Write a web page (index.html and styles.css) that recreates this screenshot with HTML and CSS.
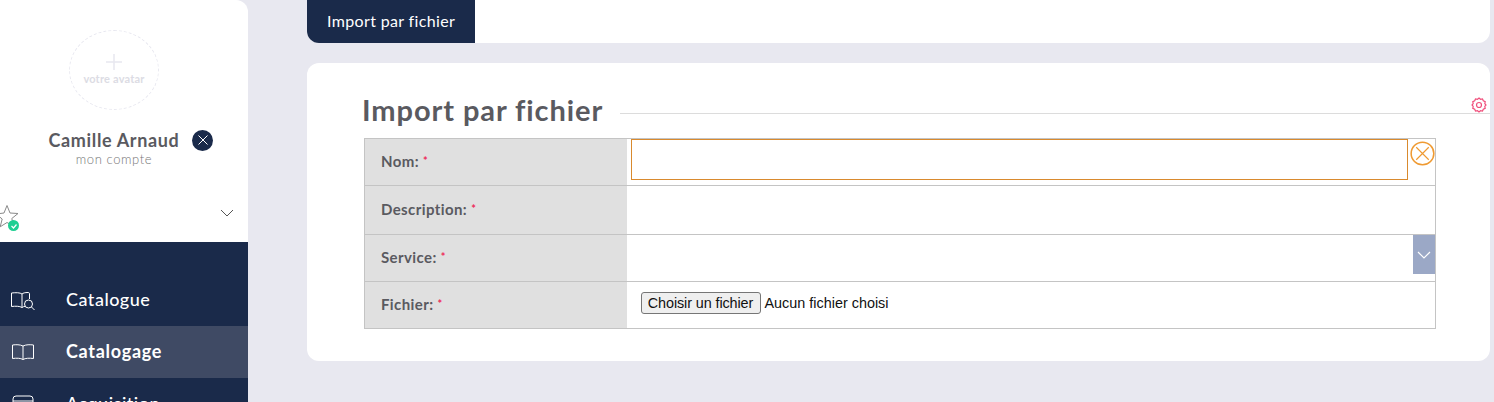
FILE: index.html
```html
<!DOCTYPE html>
<html lang="fr">
<head>
  <meta charset="UTF-8">
  <title>Import par fichier</title>
  <link rel="stylesheet" href="styles.css">
</head>
<body>
  <aside class="sidebar">
    <div class="profile">
      <div class="avatar">
        <svg class="avatar-plus" width="16" height="16" viewBox="0 0 16 16"><path d="M8 0v16M0 8h16" stroke="#e8e8f0" stroke-width="1.5" fill="none"/></svg>
        <span>votre avatar</span>
      </div>
      <div class="user-row">
        <span class="user-name">Camille Arnaud</span>
        <span class="logout">
          <svg width="10" height="10" viewBox="0 0 10 10"><path d="M.5.5l9 9M9.500.5l-9 9" stroke="#fff" stroke-width="1" fill="none"/></svg>
        </span>
      </div>
      <div class="user-link">mon compte</div>
      <div class="favorites">
        <span class="star">
          <svg width="22" height="24" viewBox="0 0 22 24"><path d="M7 .5l3 7.500 8 .5-6.200 5 2 7.800L7 17.500 .2 21.800l2-7.800L-4 9l8-1z" stroke="#8a8a8a" stroke-width="1" fill="none"/></svg>
          <span class="star-check">
            <svg width="8" height="8" viewBox="0 0 8 8"><path d="M1.500 4l2 2 3-3.500" stroke="#fff" stroke-width="1.200" fill="none"/></svg>
          </span>
        </span>
        <svg class="fav-arrow" width="14" height="8" viewBox="0 0 14 8"><path d="M1 1l6 6 6-6" stroke="#555" stroke-width="1" fill="none"/></svg>
      </div>
    </div>
    <nav class="menu">
      <a class="menu-item" href="#">
        <svg width="26" height="20" viewBox="0 0 26 20"><path d="M12 4C10 2.500 6 2.500 1.500 3v13.500c4-.5 8-.5 10.500 1 1-.7 2-1 3-1.200M12 4v13.500M12 4c1-1 3-1.500 6-1.500 1.200 0 1.500 .5 1.500 1.500v5" stroke="#fff" stroke-width="1" fill="none"/><circle cx="18.500" cy="14" r="4" stroke="#fff" fill="none"/><path d="M21.500 17l3 3" stroke="#fff" fill="none"/></svg>
        <span>Catalogue</span>
      </a>
      <a class="menu-item active" href="#">
        <svg width="26" height="20" viewBox="0 0 26 20"><path d="M13 4C10 2.500 6 2.500 2.500 3v13.500c4-.5 8-.5 10.500 1 2.500-1.500 6.500-1.500 10.500-1V3c-3.500-.5-7.500-.5-10.500 1zM13 4v13.500" stroke="#fff" stroke-width="1" fill="none"/></svg>
        <span>Catalogage</span>
      </a>
      <a class="menu-item" href="#">
        <svg width="26" height="20" viewBox="0 0 26 20"><rect x="3" y="2" width="20" height="14" rx="3" stroke="#fff" fill="none"/><path d="M3 7h20" stroke="#fff" fill="none"/></svg>
        <span>Acquisition</span>
      </a>
    </nav>
  </aside>

  <main class="content">
    <div class="tabs">
      <a class="tab" href="#">Import par fichier</a>
    </div>
    <section class="card">
      <div class="card-title">
        <h1>Import par fichier</h1>
        <span class="title-line"></span>
        <svg class="gear" width="16" height="16" viewBox="0 0 16 16"><path d="M8 1l1.500 1.300 2-.4.800 1.900 1.900.8-.4 2L15 8l-1.200 1.400.4 2-1.900.8-.8 1.900-2-.4L8 15l-1.500-1.300-2 .4-.8-1.900-1.900-.8.4-2L1 8l1.200-1.400-.4-2 1.900-.8.800-1.900 2 .4z" stroke="#f0507c" stroke-width="1.200" fill="none"/><circle cx="8" cy="8" r="2.500" stroke="#f0507c" stroke-width="1.200" fill="none"/></svg>
      </div>
      <table class="form-table">
        <tr class="row-nom">
          <th><span>Nom: <em>*</em></span></th>
          <td>
            <div class="input-wrap">
              <input type="text" class="text-input">
              <svg class="clear" width="25" height="25" viewBox="0 0 26 26"><circle cx="13" cy="13" r="11.800" stroke="#ef9a32" stroke-width="1.600" fill="none"/><path d="M6.500 6.500l13 13M19.500 6.500l-13 13" stroke="#ef9a32" stroke-width="1.200" fill="none"/></svg>
            </div>
          </td>
        </tr>
        <tr class="row-desc">
          <th><span>Description: <em>*</em></span></th>
          <td></td>
        </tr>
        <tr class="row-service">
          <th><span>Service: <em>*</em></span></th>
          <td>
            <div class="select-wrap">
              <span class="select-btn">
                <svg width="14" height="8" viewBox="0 0 14 8"><path d="M1 1l6 6 6-6" stroke="#fff" stroke-width="1.200" fill="none"/></svg>
              </span>
            </div>
          </td>
        </tr>
        <tr class="row-file">
          <th><span>Fichier: <em>*</em></span></th>
          <td>
            <div class="file-field">
              <button type="button" class="file-btn">Choisir un fichier</button>
              <span class="file-name">Aucun fichier choisi</span>
            </div>
          </td>
        </tr>
      </table>
    </section>
  </main>
</body>
</html>
```

FILE: styles.css
```css
body {
  margin: 0;
  background-color: #e8e8f0;
  font-family: Lato, "Open Sans", sans-serif;
  display: flex;
  align-items: flex-start;
  height: 402px;
  overflow: hidden;
}

/* sidebar */
.sidebar {
  width: 248px;
  height: 402px;
  overflow: hidden;
  flex-shrink: 0;
}
.profile {
  height: 242px;
  background: white;
  border-top-right-radius: 12px;
  display: flex;
  flex-direction: column;
  align-items: center;
  padding: 30px 20px 0 0;
  box-sizing: border-box;
}
.avatar {
  width: 90px;
  height: 80px;
  border: 1px dashed #e8e8f0;
  border-radius: 50%;
  box-sizing: border-box;
  display: flex;
  flex-direction: column;
  align-items: center;
  padding-top: 23px;
  font-size: 11px;
  font-weight: 700;
  letter-spacing: 0.2px;
  color: #dcdce4;
}
.avatar-plus {
  margin-bottom: 2px;
}
.user-row {
  display: flex;
  align-items: center;
  gap: 13px;
  margin-top: 19px;
  margin-left: 34px;
  height: 22px;
}
.user-name {
  font-size: 18px;
  font-weight: 700;
  color: #5a5a60;
  letter-spacing: 0.65px;
}
.logout {
  width: 21px;
  height: 21px;
  border-radius: 50%;
  background: #1a2a4a;
  display: flex;
  align-items: center;
  justify-content: center;
}
.user-link {
  font-size: 13px;
  font-weight: 300;
  color: #777;
  letter-spacing: 0.6px;
}
.favorites {
  align-self: stretch;
  margin-right: -20px;
  display: flex;
  justify-content: space-between;
  align-items: flex-start;
  margin-top: 37px;
  padding-right: 14px;
}
.star {
  position: relative;
  display: block;
  width: 22px;
  height: 24px;
  margin-top: 1px;
}
.star-check {
  position: absolute;
  left: 8px;
  top: 15px;
  width: 11px;
  height: 11px;
  border-radius: 50%;
  background: #1fcf92;
  display: flex;
  align-items: center;
  justify-content: center;
}
.fav-arrow {
  margin-top: 5px;
}
.menu {
  background: #1a2a4a;
  padding-top: 32px;
  height: 200px;
  box-sizing: border-box;
}
.menu-item {
  display: flex;
  align-items: center;
  height: 52px;
  padding-left: 10px;
  gap: 30px;
  color: white;
  text-decoration: none;
  font-size: 18px;
  font-weight: 500;
  letter-spacing: 0.5px;
}
.menu-item span {
  padding-bottom: 2px;
}
.menu-item.active {
  background: #3f4a64;
  font-weight: 700;
  letter-spacing: 0.7px;
}

/* main */
.content {
  flex: 1;
  margin-left: 59px;
  margin-right: 4px;
}
.tabs {
  background: white;
  height: 43px;
  border-radius: 0 0 12px 12px;
  margin-bottom: 20px;
}
.tab {
  display: inline-block;
  height: 43px;
  line-height: 41px;
  width: 168px;
  box-sizing: border-box;
  padding-left: 20px;
  background: #1a2a4a;
  color: white;
  text-decoration: none;
  font-size: 16px;
  letter-spacing: 0.35px;
  border-bottom-left-radius: 12px;
}
.card {
  background: white;
  height: 298px;
  box-sizing: border-box;
  border-radius: 12px;
  padding: 30px 54px 0 57px;
}
.card-title {
  position: relative;
  display: flex;
  align-items: center;
  margin-right: -54px;
  height: 45px;
  padding-bottom: 10px;
  box-sizing: border-box;
}
.card-title h1 {
  margin: 0 17px 2px -2px;
  font-size: 29px;
  font-weight: 700;
  color: #5a5a60;
  letter-spacing: 0.92px;
}
.title-line {
  flex: 1;
  height: 1px;
  background: #dcdcdc;
  margin-top: 5px;
}
.gear {
  position: absolute;
  right: 3px;
  top: 4px;
}
.form-table {
  width: 1072px;
  border-collapse: collapse;
  table-layout: fixed;
  font-size: 15px;
}
.form-table th,
.form-table td {
  border: 1px solid #c4c4c4;
  padding: 0;
}
.form-table th {
  width: 262px;
  background: #e0e0e0;
  border-right: none;
  text-align: left;
  padding-left: 16px;
  box-sizing: border-box;
  font-weight: 700;
  color: #5a5a60;
  letter-spacing: 0.4px;
}
.form-table th span {
  display: block;
  padding-bottom: 2px;
}
.form-table td {
  border-left: none;
}
.form-table em {
  color: #ee2a5a;
  font-size: 11px;
  font-style: normal;
  vertical-align: 2px;
}
.row-nom { height: 47px; }
.row-desc { height: 49px; }
.row-service { height: 47px; }
.row-file { height: 47px; }

.row-nom td {
  vertical-align: top;
}
.input-wrap {
  display: flex;
  align-items: flex-start;
  padding-left: 4px;
}
.text-input {
  flex: 1;
  min-width: 0;
  height: 41px;
  box-sizing: border-box;
  border: 1px solid #d98a2e;
  padding: 0;
  outline: none;
}
.clear {
  margin: 2px 0 0 2px;
}
.select-wrap {
  display: flex;
  justify-content: flex-end;
  height: 46px;
}
.select-btn {
  width: 22px;
  height: 39px;
  background: #9ba8c6;
  display: flex;
  align-items: center;
  justify-content: center;
}
.file-field {
  display: flex;
  align-items: center;
  gap: 4px;
  margin-left: 14px;
  padding-bottom: 4px;
  font-family: "Liberation Sans", Arial, sans-serif;
  font-size: 14.400px;
  letter-spacing: -0.1px;
  color: #111;
}
.file-name {
  letter-spacing: 0;
}
.file-btn {
  width: 120px;
  height: 22px;
  padding: 0;
  background: #efefef;
  border: 1px solid #767676;
  border-radius: 3px;
  font: inherit;
  letter-spacing: inherit;
  color: #111;
}
```
